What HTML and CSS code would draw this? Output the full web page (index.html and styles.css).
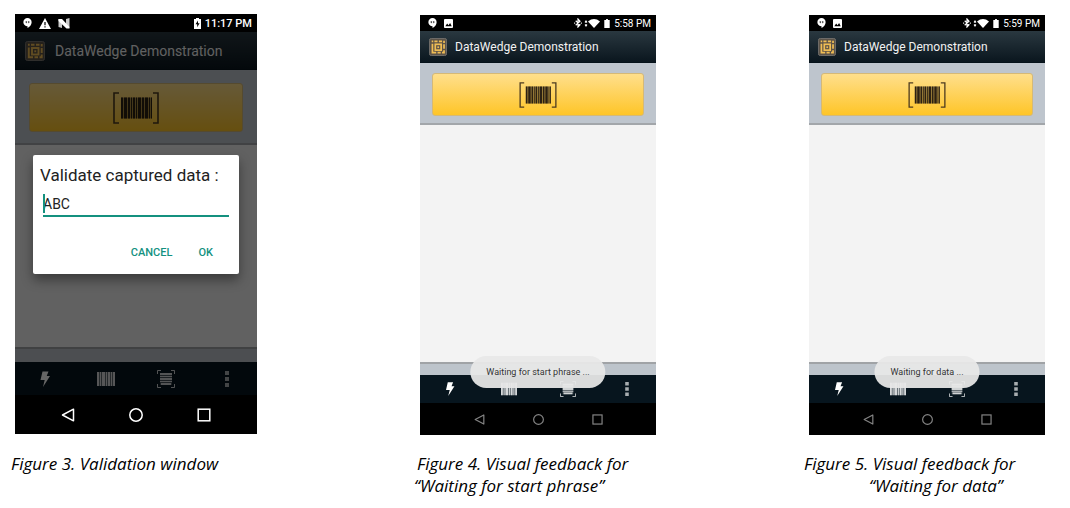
FILE: index.html
```html
<!DOCTYPE html>
<html lang="en">
<head>
<meta charset="utf-8">
<title>DataWedge Demonstration</title>
<link rel="stylesheet" href="styles.css">
</head>
<body>
<svg class="sprite" aria-hidden="true">
  <symbol id="chat" viewBox="0 0 10 11"><path fill="#fff" d="M5 0a4.6 4.6 0 0 1 4.6 4.6C9.600 7.400 7.500 9.700 5 11V9.200A4.600 4.600 0 1 1 5 0Z"/><path fill="#444" d="M2.900 3.600h1.600v1.600l-.8.8v-.8h-.8zM5.500 3.600h1.600v1.600l-.8.8v-.8h-.8z"/></symbol>
  <symbol id="warn" viewBox="0 0 12 11"><path fill="#fff" d="M6 0l6 11H0z"/><path fill="#000" d="M5.400 4h1.200v3.300H5.400zM5.400 8.200h1.200v1.200H5.400z"/></symbol>
  <symbol id="nougat" viewBox="0 0 12 11"><path fill="#ccc" d="M.5 1l3.500 1v8l-3.500-1zM8 1l3.500-1v9.500L8 10z"/><path fill="#fff" d="M.5 1H4l7.500 8v1.500H8.500L.5 3z"/></symbol>
  <symbol id="photo" viewBox="0 0 10 10"><rect width="10" height="10" rx="1" fill="#fff"/><path fill="#000" d="M1.500 8l2-3 1.500 2 1.800-2.500L8.600 8z"/></symbol>
  <symbol id="bluetooth" viewBox="0 0 8 10"><path fill="none" stroke="#fff" stroke-width="1.200" d="M1.700 2.700l4.300 4L4 9V1l2 2.300-4.300 4"/><path fill="#ddd" d="M0 4.500h1.200v1.200H0zM6.800 4.500H8v1.200H6.800z"/></symbol>
  <symbol id="updown" viewBox="0 0 4 8"><path fill="#fff" d="M2 0l1.700 2.500H2.700V3.400H1.300V2.500H.3zM2 8L.3 5.500h1V4.600h1.400v.9h1z"/></symbol>
  <symbol id="wifi" viewBox="0 0 12 9"><path fill="#fff" d="M0 2.400Q6-2.400 12 2.400L6 9z"/></symbol>
  <symbol id="battery" viewBox="0 0 6 10"><path fill="#fff" d="M2 0h2v1h2v9H0V1h2z"/></symbol>
  <symbol id="charging" viewBox="0 0 7 11"><path fill="#fff" d="M2 0h3v1h2v10H0V1h2z"/><path fill="#000" d="M4 2.500L1.500 6.300h1.700v2.900l2.400-4H4z"/></symbol>
  <symbol id="logo" viewBox="0 0 20 20"><rect x=".5" y=".5" width="19" height="19" rx="2" fill="#5c5348" stroke="#77746f"/><g fill="none" stroke="#efbd55" stroke-width="1.900"><rect x="7" y="7" width="6.500" height="6.500"/><path d="M3.800 6.500V16.200H8M9.500 16.200h3.500M14.500 16.200h2.200V13.500M16.700 12V7M16.700 5.500V3M14.500 3.800H11M9.500 3.800H6M4.700 3.800H3"/></g><path fill="#efbd55" d="M9.300 9.300h1.900v1.900H9.300z"/></symbol>
  <symbol id="scan" viewBox="0 0 46 32"><path fill="none" stroke="#4d3b20" stroke-width="1.600" d="M6 1H1v30h5M40 1h5v30h-5"/><path fill="#2c2113" fill-opacity=".4" d="M8 5.500h31v21H8z"/><path fill="#2c2113" d="M8 5.500h2v21H8zM11 5.500h3v21h-3zM15 5.500h2v21h-2zM18 5.500h1v21h-1zM20 5.500h2v21h-2zM23 5.500h1v21h-1zM25 5.500h3v21h-3zM29 5.500h2v21h-2zM32 5.500h3v21h-3zM36 5.500h1v21h-1zM38 5.500h1v21h-1z"/></symbol>
  <symbol id="bolt" viewBox="0 0 18 18"><path fill="#fff" d="M6.500 1.500h6L10.700 6H14L7 17l1.700-7H4.500z"/></symbol>
  <symbol id="bars" viewBox="0 0 18 18"><path fill="#fff" fill-opacity=".35" d="M0 2h18v14H0z"/><path fill="#fff" fill-opacity=".75" d="M0 2h2v14H0zM3 2h1v14H3zM5 2h3v14H5zM9 2h1v14H9zM11 2h2v14h-2zM14 2h1v14h-1zM16 2h2v14h-2z"/></symbol>
  <symbol id="frame" viewBox="0 0 18 18"><path fill="none" stroke="#fff" stroke-opacity=".8" d="M.5 4V.5H4M14 .5h3.500V4M17.500 14v3.500H14M4 17.500H.5V14"/><path fill="#fff" fill-opacity=".25" d="M3 3h12v12H3z"/><path fill="#fff" fill-opacity=".75" d="M3 3h12v2H3zM3 6h12v1H3zM3 8h12v2H3zM3 11h12v1H3zM4 13h10v2H4z"/></symbol>
  <symbol id="dots" viewBox="0 0 18 18"><path fill="#fff" fill-opacity=".65" d="M7 1h4v4H7zM7 7h4v4H7zM7 13h4v4H7z"/></symbol>
  <symbol id="back" viewBox="0 0 14 14"><path fill="none" stroke="currentColor" stroke-width="1.500" stroke-linejoin="round" d="M12.500 1.200v11.600L1.500 7z"/></symbol>
  <symbol id="home" viewBox="0 0 14 14"><circle cx="7" cy="7" r="6.200" fill="none" stroke="currentColor" stroke-width="1.500"/></symbol>
  <symbol id="recent" viewBox="0 0 14 14"><rect x="1.200" y="1.200" width="11.600" height="11.600" fill="none" stroke="currentColor" stroke-width="1.500"/></symbol>
</svg>

<main class="figures">
  <figure class="figure">
    <div class="phone phone-large">
      <div class="status">
        <svg class="s-chat"><use href="#chat"/></svg><svg class="s-wide"><use href="#warn"/></svg><svg class="s-wide"><use href="#nougat"/></svg>
        <span class="status-right"><svg class="s-charging"><use href="#charging"/></svg><time>11:17 PM</time></span>
      </div>
      <div class="app app-dimmed">
        <header class="header"><svg class="logo"><use href="#logo"/></svg><h2 class="title">DataWedge Demonstration</h2></header>
        <div class="band"><button class="scan" aria-label="Scan"><svg class="scan-icon"><use href="#scan"/></svg></button></div>
        <div class="content"></div>
        <div class="strip"></div>
        <div class="toolbar">
          <button class="tool" aria-label="Trigger"><svg><use href="#bolt"/></svg></button>
          <button class="tool" aria-label="Barcode"><svg><use href="#bars"/></svg></button>
          <button class="tool" aria-label="Capture"><svg><use href="#frame"/></svg></button>
          <button class="tool" aria-label="More"><svg><use href="#dots"/></svg></button>
        </div>
        <form class="dialog">
          <label class="dialog-title" for="captured">Validate captured data :</label>
          <div class="field"><input class="input" id="captured" type="text" value="ABC"><span class="caret"></span></div>
          <div class="actions"><button class="action" type="button">CANCEL</button><button class="action" type="button">OK</button></div>
        </form>
      </div>
      <nav class="nav">
        <button class="key" aria-label="Back"><svg><use href="#back"/></svg></button>
        <button class="key" aria-label="Home"><svg><use href="#home"/></svg></button>
        <button class="key" aria-label="Recent"><svg><use href="#recent"/></svg></button>
      </nav>
    </div>
    <figcaption class="caption">Figure 3. Validation window</figcaption>
  </figure>

  <figure class="figure figure-second">
    <div class="phone">
      <div class="status">
        <svg class="s-chat"><use href="#chat"/></svg><svg class="s-photo"><use href="#photo"/></svg>
        <span class="status-right"><svg class="s-bt"><use href="#bluetooth"/></svg><svg class="s-updown"><use href="#updown"/></svg><svg class="s-wifi"><use href="#wifi"/></svg><svg class="s-battery"><use href="#battery"/></svg><time>5:58 PM</time></span>
      </div>
      <div class="app">
        <header class="header"><svg class="logo"><use href="#logo"/></svg><h2 class="title">DataWedge Demonstration</h2></header>
        <div class="band"><button class="scan" aria-label="Scan"><svg class="scan-icon"><use href="#scan"/></svg></button></div>
        <div class="content"></div>
        <div class="strip"></div>
        <div class="toolbar">
          <button class="tool" aria-label="Trigger"><svg><use href="#bolt"/></svg></button>
          <button class="tool" aria-label="Barcode"><svg><use href="#bars"/></svg></button>
          <button class="tool" aria-label="Capture"><svg><use href="#frame"/></svg></button>
          <button class="tool" aria-label="More"><svg><use href="#dots"/></svg></button>
        </div>
        <div class="toast" role="status">Waiting for start phrase ...</div>
      </div>
      <nav class="nav">
        <button class="key" aria-label="Back"><svg><use href="#back"/></svg></button>
        <button class="key" aria-label="Home"><svg><use href="#home"/></svg></button>
        <button class="key" aria-label="Recent"><svg><use href="#recent"/></svg></button>
      </nav>
    </div>
    <figcaption class="caption"><span class="line line-start">Figure 4. Visual feedback for</span><span class="line">“Waiting for start phrase”</span></figcaption>
  </figure>

  <figure class="figure figure-third">
    <div class="phone">
      <div class="status">
        <svg class="s-chat"><use href="#chat"/></svg><svg class="s-photo"><use href="#photo"/></svg>
        <span class="status-right"><svg class="s-bt"><use href="#bluetooth"/></svg><svg class="s-updown"><use href="#updown"/></svg><svg class="s-wifi"><use href="#wifi"/></svg><svg class="s-battery"><use href="#battery"/></svg><time>5:59 PM</time></span>
      </div>
      <div class="app">
        <header class="header"><svg class="logo"><use href="#logo"/></svg><h2 class="title">DataWedge Demonstration</h2></header>
        <div class="band"><button class="scan" aria-label="Scan"><svg class="scan-icon"><use href="#scan"/></svg></button></div>
        <div class="content"></div>
        <div class="strip"></div>
        <div class="toolbar">
          <button class="tool" aria-label="Trigger"><svg><use href="#bolt"/></svg></button>
          <button class="tool" aria-label="Barcode"><svg><use href="#bars"/></svg></button>
          <button class="tool" aria-label="Capture"><svg><use href="#frame"/></svg></button>
          <button class="tool" aria-label="More"><svg><use href="#dots"/></svg></button>
        </div>
        <div class="toast" role="status">Waiting for data ...</div>
      </div>
      <nav class="nav">
        <button class="key" aria-label="Back"><svg><use href="#back"/></svg></button>
        <button class="key" aria-label="Home"><svg><use href="#home"/></svg></button>
        <button class="key" aria-label="Recent"><svg><use href="#recent"/></svg></button>
      </nav>
    </div>
    <figcaption class="caption"><span class="line">Figure 5. Visual feedback for</span><span class="line line-indent">“Waiting for data”</span></figcaption>
  </figure>
</main>
</body>
</html>
```
FILE: styles.css
```css
* { box-sizing: border-box; }
body { margin: 0; background: #fff; font-family: Roboto, sans-serif; }
button { margin: 0; padding: 0; border: 0; background: none; color: inherit; font: inherit; }
svg { display: block; flex: none; }
.sprite { position: absolute; width: 0; height: 0; }

.figures {
  display: grid;
  grid-template-columns: 242fr 163fr 236fr 153fr 236fr;
  padding: 14px 25px 8px 15px;
}
.figure { margin: 0; min-width: 0; }
.figure-second { grid-column: 3; padding-top: 1px; }
.figure-third { grid-column: 5; padding-top: 1px; }

.phone {
  --status: 16px; --header: 32px; --band: 62px; --content: 237px;
  --strip: 13px; --toolbar: 28px; --nav: 32px;
  --pad: 9px; --gap: 8px; --band-pad: 10px 12px;
  --logo: 18px; --title: 12px; --time: 10px; --time-weight: 400; --icon: 16px; --key: 11px;
  --key-color: #858585; --nav-pad: 12.5%; --scan-w: 38px; --scan-h: 26px;
  background: #000;
}
.phone-large {
  --status: 18px; --header: 38px; --band: 75px; --content: 202px;
  --strip: 15px; --toolbar: 33px; --nav: 39px;
  --pad: 10px; --gap: 10px; --band-pad: 13px 14px;
  --logo: 20px; --title: 14px; --time: 11px; --time-weight: 500; --icon: 18px; --key: 14px;
  --key-color: #fff; --nav-pad: 8%; --scan-w: 46px; --scan-h: 32px;
}

.status { display: flex; align-items: center; gap: 7px; height: var(--status); padding: 0 5px 0 8px; color: #fff; }
.status-right { display: flex; align-items: center; gap: 4px; margin-left: auto; font-size: var(--time); font-weight: var(--time-weight); white-space: nowrap; }
.s-chat { width: 9px; height: 10px; }
.s-wide { width: 12px; height: 11px; }
.s-photo { width: 9px; height: 9px; }
.s-charging { width: 7px; height: 11px; }
.s-bt { width: 8px; height: 10px; margin-right: -2px; }
.s-updown { width: 4px; height: 7px; margin-right: -4px; }
.s-wifi { width: 12px; height: 9px; }
.s-battery { width: 6px; height: 9px; }

.app { position: relative; }
.app-dimmed::after { content: ""; position: absolute; inset: 0; background: rgba(0, 0, 0, .6); }
.header {
  display: flex; align-items: center; gap: var(--gap); height: var(--header); padding: 0 var(--pad);
  background: linear-gradient(#2a3840, #0a161e); border-bottom: 1px solid #06121a;
}
.logo { width: var(--logo); height: var(--logo); }
.title { margin: 0; color: #f2f2f2; font-size: var(--title); font-weight: 400; white-space: nowrap; }
.band { height: var(--band); padding: var(--band-pad); background: #bec5cd; border-bottom: 2px solid #a2a6aa; }
.scan {
  display: flex; align-items: center; justify-content: center; width: 100%;
  height: calc(var(--scan-h) + 17px); border: 1px solid #d5b977; border-radius: 3px;
  background: linear-gradient(#ffdf8c, #fec528);
}
.scan-icon { width: var(--scan-w); height: var(--scan-h); }
.content { height: var(--content); background: #f3f3f3; }
.strip { height: var(--strip); background: #bdc4cb; border-top: 2px solid #a0a3a6; }
.toolbar { display: grid; grid-template-columns: repeat(4, 1fr); height: var(--toolbar); background: #07151e; }
.tool, .key { display: flex; align-items: center; justify-content: center; }
.tool svg { width: var(--icon); height: var(--icon); }
.nav { display: grid; grid-template-columns: repeat(3, 1fr); height: var(--nav); padding: 0 var(--nav-pad); color: var(--key-color); }
.key svg { width: var(--key); height: var(--key); }

.toast {
  position: absolute; bottom: 15px; left: 50%; transform: translateX(-50%);
  padding: 0 16px; border-radius: 16px; background: rgba(232, 232, 232, .94);
  color: #333; font-size: 9px; line-height: 32px; white-space: nowrap;
}

.dialog {
  position: absolute; z-index: 1; top: 123px; left: 18px; right: 18px;
  padding: 8px 10px 11px 7px; border-radius: 2px; background: #fff;
  box-shadow: 0 6px 12px rgba(0, 0, 0, .4);
}
.dialog-title { display: block; color: #222; font-size: 17px; line-height: 24px; white-space: nowrap; }
.field { position: relative; margin: 5px 0 0 3px; }
.input {
  display: block; width: 100%; height: 25px; padding: 1px 0 0; border: 0; border-bottom: 2px solid #14917f;
  outline: 0; background: none; color: #222; font: 14px Roboto, sans-serif;
}
.caret { position: absolute; top: 2px; left: 0; width: 2px; height: 19px; background: #14917f; }
.actions { display: flex; justify-content: flex-end; gap: 26px; padding: 26px 16px 0 0; }
.action { color: #14917f; font-size: 11px; font-weight: 500; line-height: 20px; }

.caption {
  margin: 19px 0 0 -4px; color: #000; font-family: "Open Sans", sans-serif;
  font-size: 17px; font-style: italic; line-height: 22px; white-space: nowrap;
}
.figure-second .caption { margin-top: 18px; margin-left: -6px; }
.figure-third .caption { margin-top: 18px; margin-left: -5px; }
.line { display: block; }
.line-start { padding-left: 3px; }
.line-indent { padding-left: 65px; }
```
